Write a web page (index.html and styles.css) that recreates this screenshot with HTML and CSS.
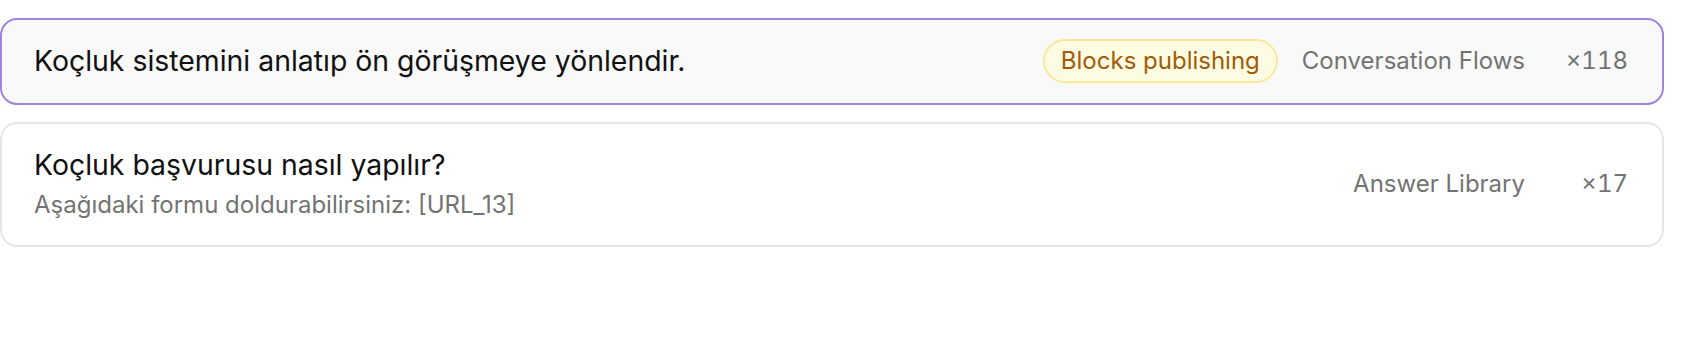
FILE: index.html
```html
<!DOCTYPE html>
<html lang="tr">
<head>
<meta charset="utf-8">
<link rel="stylesheet" href="styles.css">
</head>
<body>
<div class="list">
  <div class="row row-active">
    <div class="main">
      <div class="title">Koçluk sistemini anlatıp ön görüşmeye yönlendir.</div>
    </div>
    <span class="pill">Blocks publishing</span>
    <span class="source">Conversation Flows</span>
    <span class="count">×118</span>
  </div>
  <div class="row">
    <div class="main">
      <div class="title">Koçluk başvurusu nasıl yapılır?</div>
      <div class="sub">Aşağıdaki formu doldurabilirsiniz: [URL_13]</div>
    </div>
    <span class="source">Answer Library</span>
    <span class="count">×17</span>
  </div>
</div>
</body>
</html>
```

FILE: styles.css
```css
html, body {
  margin: 0;
  padding: 0;
  background: #ffffff;
}
body {
  font-family: Inter, "Noto Sans", "Liberation Sans", sans-serif;
  color: #141414;
}
.list {
  width: 1664px;
  padding-top: 18px;
  display: flex;
  flex-direction: column;
  gap: 17px;
}
.row {
  display: flex;
  align-items: center;
  gap: 24px;
  padding: 24px 34px 25px 32px;
  border: 2px solid #e6e6e6;
  border-radius: 17px;
  background: #ffffff;
}
.row-active {
  padding-top: 19px;
  padding-bottom: 20px;
  border-color: #a084dc;
  background: #f9f9f9;
}
.main {
  flex: 1;
  min-width: 0;
  display: flex;
  flex-direction: column;
  gap: 8px;
}
.title {
  font-size: 28.4px;
  line-height: 34px;
  color: #111111;
}
.sub {
  font-size: 24px;
  line-height: 30px;
  color: #737373;
}
.pill {
  font-size: 24px;
  line-height: 36px;
  padding: 2px 16px;
  border: 2px solid #fbe79a;
  border-radius: 999px;
  background: #fefbe3;
  color: #a05c08;
}
.source {
  font-size: 24px;
  line-height: 34px;
  color: #737373;
}
.count {
  min-width: 79px;
  text-align: right;
  font-size: 24px;
  line-height: 34px;
  color: #737373;
  font-variant-numeric: tabular-nums;
}
```
